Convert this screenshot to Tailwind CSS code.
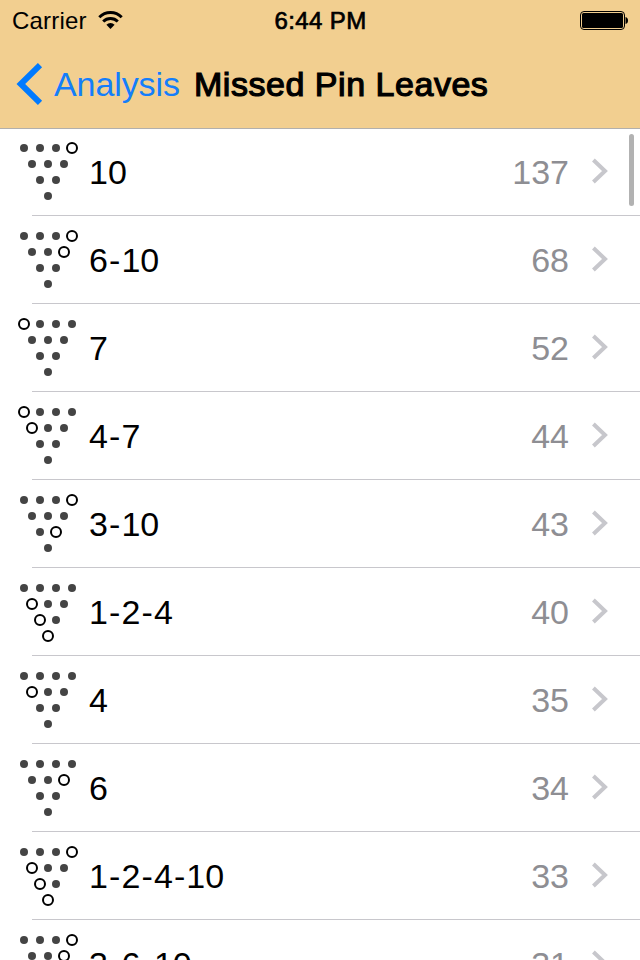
<!DOCTYPE html>
<html lang="en">
<head>
<meta charset="utf-8">
<title>Missed Pin Leaves</title>
<script src="https://cdn.jsdelivr.net/npm/@tailwindcss/browser@4"></script>
</head>
<body class="bg-white">
<div class="relative flex h-[960px] w-[640px] flex-col overflow-hidden bg-white font-['Liberation_Sans',Arial,sans-serif] text-black">
  <header class="h-32 shrink-0 bg-[#f2cf90] shadow-[0_1px_0_#b2b0ad] z-10">
    <div class="grid h-10 grid-cols-3 items-center pl-3 pr-[11px]">
      <div class="flex items-center gap-[11px]">
        <span class="pt-0.5 text-[24px] leading-[38px] tracking-[0.2px]">Carrier</span>
        <svg class="h-[18px] w-[25px]" viewBox="0 0 25 18" fill="none" stroke="#000" stroke-width="2.9">
          <path d="M1.3 6.2a15.7 15.7 0 0 1 22.4 0M5.2 10.6a10.3 10.3 0 0 1 14.6 0"/>
          <path d="M8.4 13.8a5.8 5.8 0 0 1 8.2 0L12.5 18z" fill="#000" stroke="none"/>
        </svg>
      </div>
      <span class="pt-0.5 text-center text-[24px] leading-[38px] tracking-[0.4px] [-webkit-text-stroke:0.7px_#000]">6:44 PM</span>
      <svg class="h-5 w-[50px] justify-self-end" viewBox="0 0 50 20">
        <rect x="1.5" y="1.5" width="44" height="18" rx="3.5" fill="none" stroke="#000"/>
        <rect x="3" y="3" width="41" height="15" rx="1.5" fill="#000"/>
        <path d="M46.5 7q2.5 .5 2.5 3.5t-2.5 3.5z" fill="#000"/>
      </svg>
    </div>
    <div class="flex h-[88px] items-center pl-4">
      <svg class="h-[44px] w-[28px]" viewBox="0 0 28 44" fill="none" stroke="#007aff" stroke-width="6"><path d="M24 3.2L4.8 22L24 40.8"/></svg>
      <span class="ml-[10px] w-[140px] text-[34px] leading-[40px] tracking-[-0.1px] text-[#147efb]">Analysis</span>
      <h1 class="text-[34px] font-normal leading-[40px] whitespace-nowrap tracking-[0.53px] [-webkit-text-stroke:1.2px_#000]">Missed Pin Leaves</h1>
    </div>
  </header>
  <main id="list"></main>
  <div class="absolute right-[6px] top-[134px] h-[72px] w-[5px] rounded-full bg-[#b2b2b2]"></div>
</div>
<script>
const leaves = [['10',137],['6-10',68],['7',52],['4-7',44],['3-10',43],['1-2-4',40],['4',35],['6',34],['1-2-4-10',33],['3-6-10',31]];
const deck = [[7,8,9,10],[4,5,6],[2,3],[1]];
function pins(name) {
  const left = name.split('-').map(Number);
  return deck.map((row, r) => row.map((pin, i) => {
    const x = 8 + r * 8 + i * 16, y = 8 + r * 16;
    return left.includes(pin)
      ? `<circle cx="${x}" cy="${y}" r="5" fill="#fff" stroke="#000" stroke-width="2"/>`
      : `<circle cx="${x}" cy="${y}" r="4" fill="#444"/>`;
  }).join('')).join('');
}
document.getElementById('list').innerHTML = leaves.map(([name, count]) => `
  <div class="h-[88px] pl-8">
    <div class="flex h-full items-start border-b border-[#c8c7cc] pr-8 pt-3">
      <svg class="-ml-4 h-16 w-16 shrink-0" viewBox="0 0 64 64">${pins(name)}</svg>
      <span class="ml-[9px] mt-3 grow text-[34px] leading-[40px]">${name.replaceAll('-', '<span class="mx-[1.1px]">-</span>')}</span>
      <span class="mt-3 text-[34px] leading-[40px] text-[#8e8e93]">${count}</span>
      <svg class="ml-[22px] mt-[17px] h-[28px] w-[17px]" viewBox="0 0 17 28" fill="none" stroke="#c7c7cc" stroke-width="4"><path d="M2.4 3L14 14L2.4 25"/></svg>
    </div>
  </div>`).join('');
</script>
</body>
</html>
